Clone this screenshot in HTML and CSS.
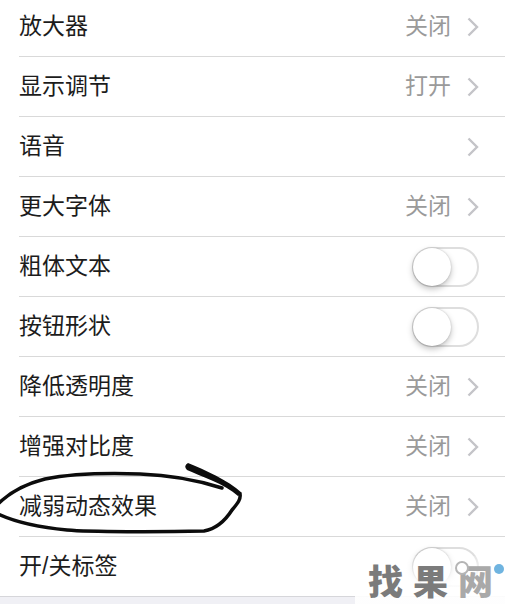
FILE: index.html
```html
<!DOCTYPE html>
<html lang="zh-CN">
<head>
    <meta charset="UTF-8">
    <meta name="viewport" content="width=device-width, initial-scale=1.0">
    <title>辅助功能</title>
    <link rel="stylesheet" href="styles.css">
</head>
<body>
    <div class="screen">
        <ul class="settings">
            <li class="row"><span class="label">放大器</span><span class="value">关闭</span><svg class="chevron" viewBox="0 0 12 20"><path d="M1.5 1.5 10 10 1.5 18.5"/></svg></li>
            <li class="row"><span class="label">显示调节</span><span class="value">打开</span><svg class="chevron" viewBox="0 0 12 20"><path d="M1.5 1.5 10 10 1.5 18.5"/></svg></li>
            <li class="row"><span class="label">语音</span><svg class="chevron" viewBox="0 0 12 20"><path d="M1.5 1.5 10 10 1.5 18.5"/></svg></li>
            <li class="row"><span class="label">更大字体</span><span class="value">关闭</span><svg class="chevron" viewBox="0 0 12 20"><path d="M1.5 1.5 10 10 1.5 18.5"/></svg></li>
            <li class="row"><span class="label">粗体文本</span><span class="switch"><span class="knob"></span></span></li>
            <li class="row"><span class="label">按钮形状</span><span class="switch"><span class="knob"></span></span></li>
            <li class="row"><span class="label">降低透明度</span><span class="value">关闭</span><svg class="chevron" viewBox="0 0 12 20"><path d="M1.5 1.5 10 10 1.5 18.5"/></svg></li>
            <li class="row"><span class="label">增强对比度</span><span class="value">关闭</span><svg class="chevron" viewBox="0 0 12 20"><path d="M1.5 1.5 10 10 1.5 18.5"/></svg></li>
            <li class="row"><span class="label">减弱动态效果</span><span class="value">关闭</span><svg class="chevron" viewBox="0 0 12 20"><path d="M1.5 1.5 10 10 1.5 18.5"/></svg></li>
            <li class="row"><span class="label">开/关标签</span><span class="switch"><span class="knob"></span></span></li>
        </ul>

        <!-- hand drawn circle round the highlighted row -->
        <svg class="ink" viewBox="0 0 505 604">
            <path class="ink-stroke" d="M-2 504C10 492 25 484 45 479C75 473 110 473 140 474C170 475 200 481 222 488"/>
            <path class="ink-stroke" d="M-2 514C15 522 35 527 67 530C90 532 160 532 204 531C215 529 225 521 232 510C238 503 241 499 240 494"/>
            <path class="ink-wedge" d="M188 463Q183 466 187 470C200 476 225 484 238 496L242 493C228 480 205 470 188 463Z"/>
        </svg>

        <div class="watermark">
            <span class="mark-text">找果<span class="mark-light">网</span></span>
            <span class="mark-ring"></span>
            <span class="mark-dot"></span>
        </div>
    </div>
</body>
</html>
```

FILE: styles.css
```css
html, body { margin: 0; height: 100%; background-color: #fff; }
body { overflow: hidden; font-family: "Liberation Sans", "Noto Sans CJK SC", sans-serif; }
.screen { position: relative; width: 505px; height: 604px; overflow: hidden; background-color: #f0f0f5; }
.settings { list-style: none; margin: -3px 0 0; padding: 0 0 0 19px; background-color: #fff; border-bottom: 1px solid #d6d6da; }
.row { display: flex; align-items: center; height: 59px; padding-right: 26px; border-bottom: 1px solid #d9d9d9; font-size: 23px; color: #1c1c1c; }
.row:last-child { border-bottom: none; }
.label { flex-grow: 1; margin-bottom: 5px; }
.value { margin: 0 16px 5px 0; color: #9a9a9a; }
.chevron { width: 12px; height: 20px; fill: none; stroke: #c4c4c8; stroke-width: 2.4; }
.switch { display: block; position: relative; width: 67px; height: 40px; box-sizing: border-box; border: 2px solid #dedede; border-radius: 20px; background-color: #fff; }
.knob { position: absolute; left: -1px; top: -1px; width: 38px; height: 38px; border-radius: 50%; background-color: #fff; box-shadow: 0 3px 6px rgba(0,0,0,0.25), 0 0 2px rgba(0,0,0,0.2); }
.ink { position: absolute; left: 0; top: 0; width: 505px; height: 604px; fill: none; stroke: #0c0c0c; }
.ink-stroke { stroke-width: 3.5; stroke-linecap: round; }
.ink-wedge { fill: #0c0c0c; stroke: none; }
.watermark { position: absolute; left: 355px; top: 556px; width: 150px; height: 48px; background: linear-gradient(rgba(255,255,255,0.2), rgba(255,255,255,0.9) 50%); }
.mark-text { display: block; margin-left: 13px; font-family: "Noto Sans CJK SC", sans-serif; font-size: 35px; font-weight: 900; line-height: 48px; letter-spacing: 10px; white-space: nowrap; color: #7b7b7b; }
.mark-light { color: #a9a9a9; }
.mark-ring { position: absolute; left: 100px; top: 5px; width: 10px; height: 10px; border: 2px solid #b5b5b5; border-radius: 50%; background-color: #fff; }
.mark-dot { position: absolute; left: 139px; top: 8px; width: 10px; height: 10px; border-radius: 50%; background-color: #6fb4e0; }
```
